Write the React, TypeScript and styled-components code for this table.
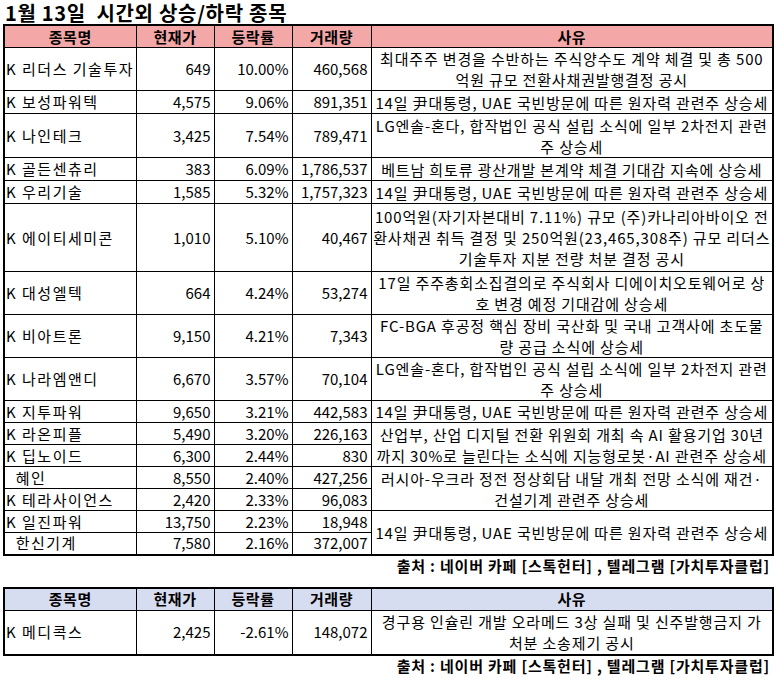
import styled, { createGlobalStyle } from 'styled-components';

const GlobalStyle = createGlobalStyle`
	body {
		margin: 0;
		background: #ffffff;
		font-family: 'Noto Sans CJK KR', 'Noto Sans', sans-serif;
		color: #000000;
	}
`;

const Page = styled.div`
	width: 778px;
	padding: 0 0 0 3px;
	box-sizing: border-box;
`;

const Title = styled.h1`
	margin: 0;
	height: 24px;
	padding-left: 2px;
	font-size: 20px;
	line-height: 25px;
	font-weight: 700;
	white-space: pre;
	letter-spacing: 0.7px;
`;

const Sheet = styled.table`
	width: 771px;
	table-layout: fixed;
	border-collapse: collapse;
	border: 2px solid #000;
	font-size: 15px;
`;

const HeadCell = styled.th<{ $tone: 'rise' | 'fall' }>`
	height: 21px;
	padding: 0;
	border: 1px solid #000;
	background: ${({ $tone }) => ($tone === 'rise' ? '#f3a7a6' : '#d7ddf1')};
	font-weight: 700;
	text-align: center;
	line-height: 20px;
	letter-spacing: 0.5px;
`;

const Cell = styled.td<{ $align?: 'left' | 'right' }>`
	padding: ${({ $align }) => ($align === 'left' ? '0 1px' : '0 3px')};
	border: 1px solid #000;
	text-align: ${({ $align }) => $align || 'right'};
	vertical-align: middle;
	line-height: 20px;
	letter-spacing: ${({ $align }) => ($align === 'left' ? '1.5px' : '0')};
	white-space: pre;
	overflow: hidden;
`;

const Reason = styled.td`
	padding: 0;
	border: 1px solid #000;
	text-align: center;
	vertical-align: middle;
	line-height: 21px;
	letter-spacing: 0.85px;
	overflow: hidden;
`;

const ReasonLine = styled.span`
	display: block;
	white-space: nowrap;
`;

const Source = styled.div`
	height: 31px;
	padding: 0 8px 0 0;
	box-sizing: border-box;
	text-align: right;
	font-size: 15px;
	font-weight: 700;
	line-height: 20px;
	letter-spacing: 0.8px;
`;

interface StockRow {
	name: string;
	price: string;
	rate: string;
	volume: string;
	height: number;
	reason?: string[];
	span?: number;
}

const NUCLEAR = ['14일 尹대통령, UAE 국빈방문에 따른 원자력 관련주 상승세'];
const BATTERY = ['LG엔솔-혼다, 합작법인 공식 설립 소식에 일부 2차전지 관련', '주 상승세'];

const rising: StockRow[] = [
	{ name: 'K 리더스 기술투자', price: '649', rate: '10.00%', volume: '460,568', height: 43, reason: ['최대주주 변경을 수반하는 주식양수도 계약 체결 및 총 500', '억원 규모 전환사채권발행결정 공시'] },
	{ name: 'K 보성파워텍', price: '4,575', rate: '9.06%', volume: '891,351', height: 23, reason: NUCLEAR },
	{ name: 'K 나인테크', price: '3,425', rate: '7.54%', volume: '789,471', height: 44, reason: BATTERY },
	{ name: 'K 골든센츄리', price: '383', rate: '6.09%', volume: '1,786,537', height: 23, reason: ['베트남 희토류 광산개발 본계약 체결 기대감 지속에 상승세'] },
	{ name: 'K 우리기술', price: '1,585', rate: '5.32%', volume: '1,757,323', height: 23, reason: NUCLEAR },
	{ name: 'K 에이티세미콘', price: '1,010', rate: '5.10%', volume: '40,467', height: 68, reason: ['100억원(자기자본대비 7.11%) 규모 (주)카나리아바이오 전', '환사채권 취득 결정 및 250억원(23,465,308주) 규모 리더스', '기술투자 지분 전량 처분 결정 공시'] },
	{ name: 'K 대성엘텍', price: '664', rate: '4.24%', volume: '53,274', height: 43, reason: ['17일 주주총회소집결의로 주식회사 디에이치오토웨어로 상', '호 변경 예정 기대감에 상승세'] },
	{ name: 'K 비아트론', price: '9,150', rate: '4.21%', volume: '7,343', height: 42, reason: ['FC-BGA 후공정 핵심 장비 국산화 및 국내 고객사에 초도물', '량 공급 소식에 상승세'] },
	{ name: 'K 나라엠앤디', price: '6,670', rate: '3.57%', volume: '70,104', height: 42, reason: BATTERY },
	{ name: 'K 지투파워', price: '9,650', rate: '3.21%', volume: '442,583', height: 22, reason: NUCLEAR },
	{ name: 'K 라온피플', price: '5,490', rate: '3.20%', volume: '226,163', height: 22, reason: ['산업부, 산업 디지털 전환 위원회 개최 속 AI 활용기업 30년', '까지 30%로 늘린다는 소식에 지능형로봇·AI 관련주 상승세'], span: 2 },
	{ name: 'K 딥노이드', price: '6,300', rate: '2.44%', volume: '830', height: 22 },
	{ name: '  혜인', price: '8,550', rate: '2.40%', volume: '427,256', height: 22, reason: ['러시아-우크라 정전 정상회담 내달 개최 전망 소식에 재건·', '건설기계 관련주 상승세'], span: 2 },
	{ name: 'K 테라사이언스', price: '2,420', rate: '2.33%', volume: '96,083', height: 22 },
	{ name: 'K 일진파워', price: '13,750', rate: '2.23%', volume: '18,948', height: 22, reason: NUCLEAR, span: 2 },
	{ name: '  한신기계', price: '7,580', rate: '2.16%', volume: '372,007', height: 22 },
];

const falling: StockRow[] = [
	{ name: 'K 메디콕스', price: '2,425', rate: '-2.61%', volume: '148,072', height: 45, reason: ['경구용 인슐린 개발 오라메드 3상 실패 및 신주발행금지 가', '처분 소송제기 공시'] },
];

function StockTable({ rows, tone }: { rows: StockRow[]; tone: 'rise' | 'fall' }) {
	return (
		<Sheet>
			<colgroup>
				<col style={{ width: 132 }} />
				<col style={{ width: 78 }} />
				<col style={{ width: 78 }} />
				<col style={{ width: 79 }} />
				<col />
			</colgroup>
			<thead>
				<tr>
					<HeadCell $tone={tone}>종목명</HeadCell>
					<HeadCell $tone={tone}>현재가</HeadCell>
					<HeadCell $tone={tone}>등락률</HeadCell>
					<HeadCell $tone={tone}>거래량</HeadCell>
					<HeadCell $tone={tone}>사유</HeadCell>
				</tr>
			</thead>
			<tbody>
				{rows.map((row) => (
					<tr key={row.name} style={{ height: row.height }}>
						<Cell $align="left">{row.name}</Cell>
						<Cell>{row.price}</Cell>
						<Cell>{row.rate}</Cell>
						<Cell>{row.volume}</Cell>
						{row.reason && (
							<Reason rowSpan={row.span || 1}>
								{row.reason.map((line) => (
									<ReasonLine key={line}>{line}</ReasonLine>
								))}
							</Reason>
						)}
					</tr>
				))}
			</tbody>
		</Sheet>
	);
}

function App() {
	return (
		<Page>
			<GlobalStyle />
			<Title>{'1월 13일  시간외 상승/하락 종목'}</Title>
			<StockTable rows={rising} tone="rise" />
			<Source>출처 : 네이버 카페 [스톡헌터] , 텔레그램 [가치투자클럽]</Source>
			<StockTable rows={falling} tone="fall" />
			<Source>출처 : 네이버 카페 [스톡헌터] , 텔레그램 [가치투자클럽]</Source>
		</Page>
	);
}

export default App;
